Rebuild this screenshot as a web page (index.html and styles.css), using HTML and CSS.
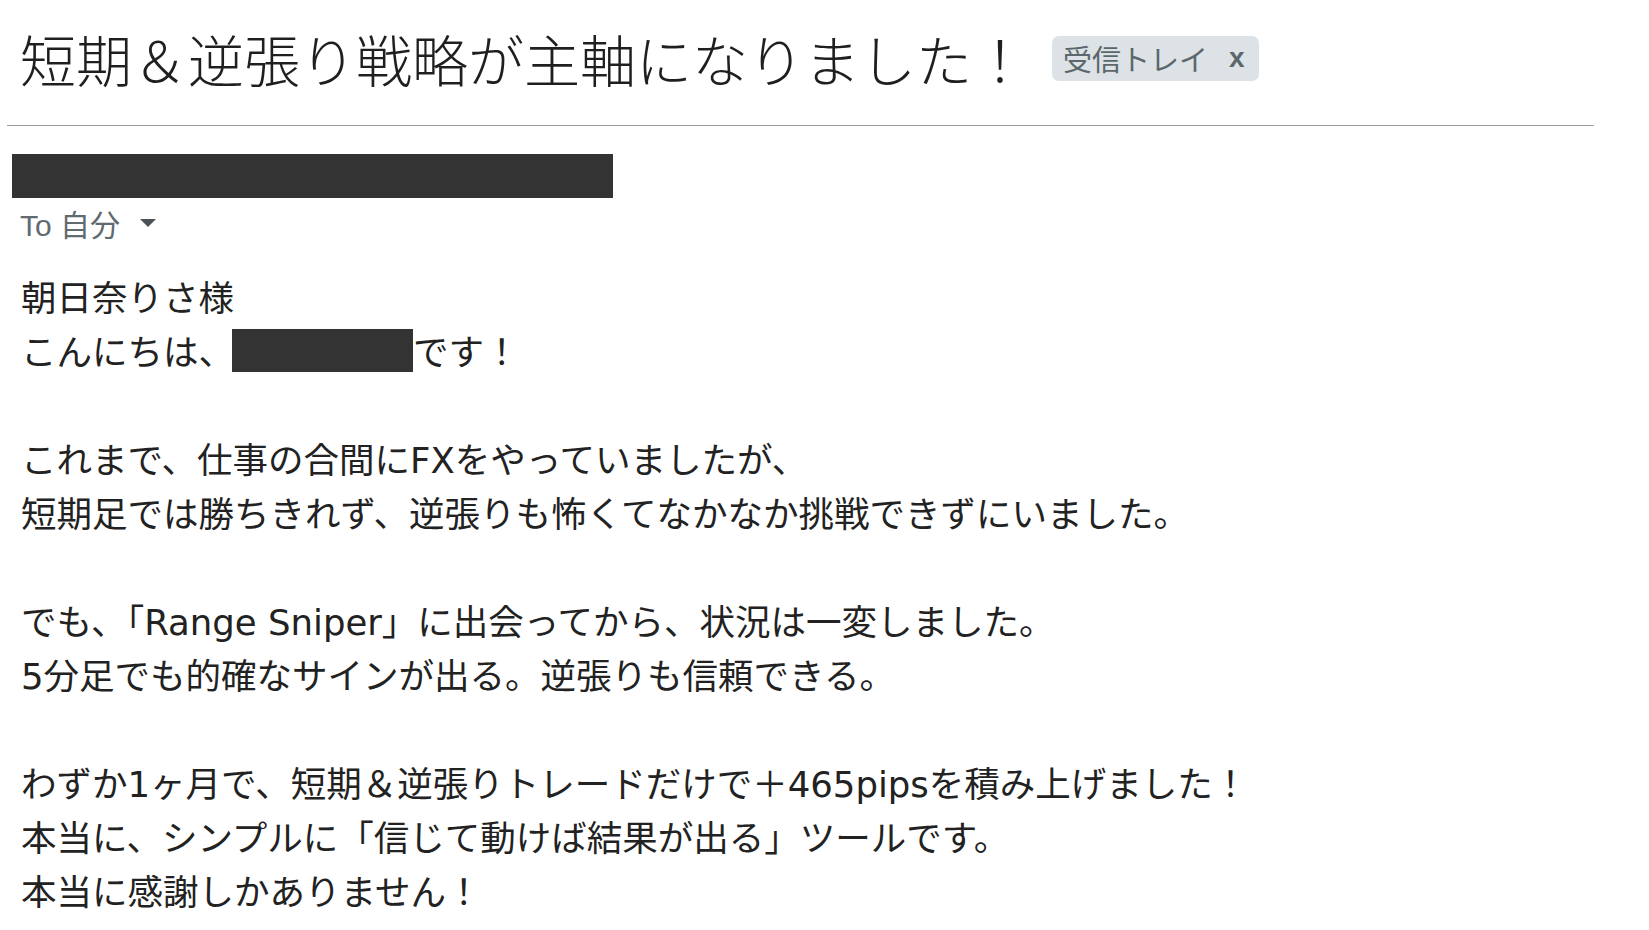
FILE: index.html
```html
<!DOCTYPE html>
<html lang="ja">

<head>
    <meta charset="UTF-8">
    <meta name="viewport" content="width=device-width, initial-scale=1.0">
    <title>短期＆逆張り戦略が主軸になりました！</title>
    <link rel="stylesheet" href="styles.css">
</head>

<body>
    <div class="mail">
        <div class="mail-head">
            <h1 class="subject">短期＆逆張り戦略が主軸になりました！</h1>
            <span class="label">受信トレイ<span class="label-x">x</span></span>
        </div>
        <div class="rule"></div>

        <div class="sender"></div>
        <div class="to">To 自分<span class="caret"></span></div>

        <div class="body">
            <p>朝日奈りさ様<br>こんにちは、<span class="mask"></span>です！</p>
            <p>これまで、仕事の合間にFXをやっていましたが、<br>短期足では勝ちきれず、逆張りも怖くてなかなか挑戦できずにいました。</p>
            <p>でも、「Range Sniper」に出会ってから、状況は一変しました。<br>5分足でも的確なサインが出る。逆張りも信頼できる。</p>
            <p>わずか1ヶ月で、短期＆逆張りトレードだけで＋465pipsを積み上げました！<br>本当に、シンプルに「信じて動けば結果が出る」ツールです。<br>本当に感謝しかありません！</p>
        </div>
    </div>
</body>

</html>
```

FILE: styles.css
```css
html,
body {
    margin: 0;
    padding: 0;
    background-color: #fff;
    font-family: "Noto Sans CJK JP", "Noto Sans", sans-serif;
    color: #222;
}

.mail {
    width: 1649px;
}

.mail-head {
    display: flex;
    align-items: center;
    height: 116px;
    padding-left: 20px;
}

.subject {
    margin: 0;
    font-size: 56px;
    line-height: 1;
    font-weight: 300;
    color: #1f1f1f;
}

.label {
    display: flex;
    align-items: center;
    height: 45px;
    margin-left: 24px;
    padding: 0 14px 0 11px;
    border-radius: 7px;
    background-color: #dce2e5;
    color: #5b676c;
    font-size: 29px;
    line-height: 1;
}

.label-x {
    margin-left: 21px;
    font-family: "Liberation Sans", sans-serif;
    font-weight: bold;
    font-size: 28px;
}

.rule {
    width: 1587px;
    margin: 9px 0 0 7px;
    border-top: 1px solid #9c9c9c;
}

.sender {
    width: 601px;
    height: 44px;
    margin: 28px 0 0 12px;
    background-color: #333;
}

.to {
    display: flex;
    align-items: center;
    height: 30px;
    margin: 10px 0 0 20px;
    font-family: "Liberation Sans", "Noto Sans CJK JP", sans-serif;
    font-size: 30px;
    color: #5f6b70;
}

.caret {
    width: 0;
    height: 0;
    margin-left: 20px;
    border-left: 8px solid transparent;
    border-right: 8px solid transparent;
    border-top: 8px solid #4a5257;
}

.body {
    margin: 34px 0 0 21px;
    font-family: "DejaVu Sans", "Noto Sans CJK JP", sans-serif;
    font-size: 35.5px;
    line-height: 54px;
}

.body p {
    margin: 0 0 54px;
}

.mask {
    display: inline-block;
    width: 181px;
    height: 43px;
    margin-left: -2px;
    background-color: #333;
    vertical-align: -7px;
}
```
